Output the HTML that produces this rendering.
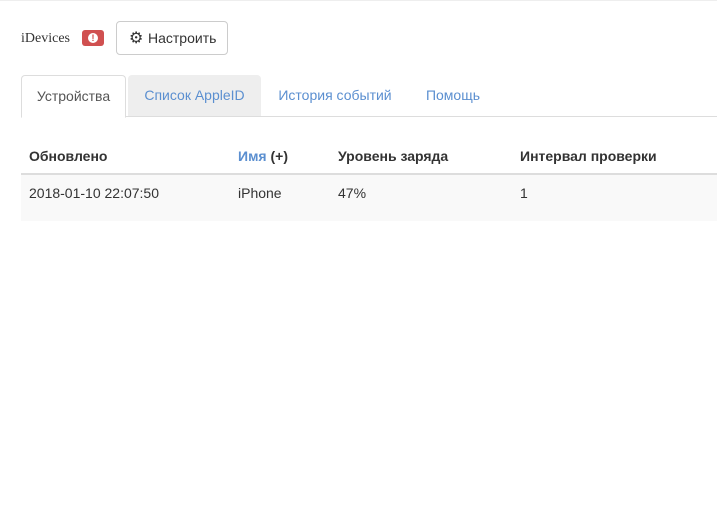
<!DOCTYPE html>
<html><head><meta charset="utf-8"><style>
body{margin:0;width:717px;height:515px;background:#fff;font-family:"Liberation Sans",sans-serif;font-size:14px;color:#333;position:relative;overflow:hidden;border-top:1px solid #eee;box-sizing:border-box}
.a{position:absolute}
.tab{position:absolute;top:74px;height:41px;line-height:41px;text-align:center;color:#5b8fd0;font-size:14px}
</style></head><body>
<div class="a" style="left:21px;top:30px;font-family:'Liberation Serif',serif;font-size:14px;color:#333">iDevices</div>
<div class="a" style="left:82px;top:29px;width:22px;height:16px;background:#d05050;border-radius:3px"><div class="a" style="left:6px;top:3px;width:10px;height:10px;border-radius:50%;background:#fff;color:#d05050;font-size:9px;font-weight:bold;text-align:center;line-height:10px">!</div></div>
<div class="a" style="left:116px;top:20px;width:110px;height:32px;border:1px solid #ccc;border-radius:4px;line-height:32px;font-size:14px"><span style="position:absolute;left:12px;font-size:16px;font-weight:bold;font-family:'DejaVu Sans',sans-serif">⚙</span><span style="position:absolute;left:31px">Настроить</span></div>
<div class="a" style="left:21px;top:115px;width:696px;height:1px;background:#ddd"></div>
<div class="tab" style="left:21px;width:103px;border:1px solid #ddd;border-bottom:1px solid #fff;border-radius:4px 4px 0 0;background:#fff;color:#555">Устройства</div>
<div class="tab" style="left:128px;width:133px;background:#eee;border-radius:4px 4px 0 0">Список AppleID</div>
<div class="tab" style="left:265px;width:140px">История событий</div>
<div class="tab" style="left:412px;width:82px">Помощь</div>
<div class="a" style="left:21px;top:172px;width:696px;height:2px;background:#ddd"></div>
<div class="a" style="left:21px;top:174px;width:696px;height:46px;background:#f9f9f9"></div>
<div class="a" style="top:147px;left:29px;font-weight:bold">Обновлено</div>
<div class="a" style="top:147px;left:238px;font-weight:bold"><span style="color:#5b8fd0">Имя</span> (+)</div>
<div class="a" style="top:147px;left:338px;font-weight:bold">Уровень заряда</div>
<div class="a" style="top:147px;left:520px;font-weight:bold">Интервал проверки</div>
<div class="a" style="top:184px;left:29px">2018-01-10 22:07:50</div>
<div class="a" style="top:184px;left:238px">iPhone</div>
<div class="a" style="top:184px;left:338px">47%</div>
<div class="a" style="top:184px;left:520px">1</div>
</body></html>
